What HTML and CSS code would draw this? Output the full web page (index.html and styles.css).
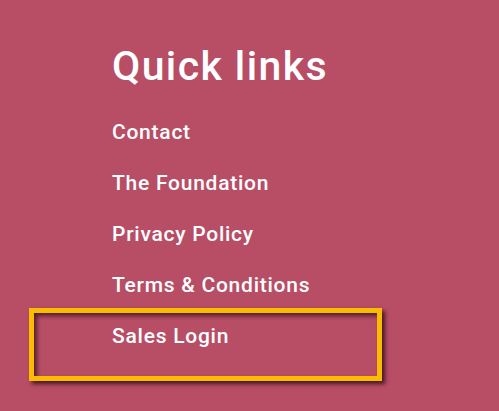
FILE: index.html
```html
<!DOCTYPE html>
<html lang="en">
<head>
  <meta charset="UTF-8">
  <meta name="viewport" content="width=device-width, initial-scale=1.0">
  <title>Quick links</title>
  <link rel="stylesheet" href="styles.css">
</head>
<body>

  <!-- Footer quick links -->
  <div class="quick-links">
    <h2>Quick links</h2>
    <ul class="link-list">
      <li><a href="#">Contact</a></li>
      <li><a href="#">The Foundation</a></li>
      <li><a href="#">Privacy Policy</a></li>
      <li><a href="#">Terms &amp; Conditions</a></li>
      <li class="marked">
        <a href="#">Sales Login</a>
        <!-- highlight frame drawn over the item -->
        <span class="highlight"></span>
      </li>
    </ul>
  </div>

</body>
</html>
```

FILE: styles.css
```css
body {
  margin: 0;
  background: #b84d66;
  font-family: Roboto, 'Liberation Sans', sans-serif;
  min-height: 411px;
}

.quick-links {
  padding: 42px 0 0 112px;
}

.quick-links h2 {
  margin: 0 0 17px;
  font-size: 41px;
  line-height: 48px;
  font-weight: 500;
  letter-spacing: 1.4px;
  color: #fff;
}

.link-list {
  list-style: none;
  margin: 0;
  padding: 0;
}

.link-list li {
  line-height: 51px;
  font-size: 21px;
  font-weight: 500;
  letter-spacing: 0.75px;
}

.link-list a {
  color: #fff;
  text-decoration: none;
}

.marked {
  position: relative;
}

/* yellow annotation box round the last link */
.highlight {
  position: absolute;
  left: -83px;
  top: -3px;
  width: 343px;
  height: 63px;
  border: 5px solid #fbbb00;
  box-shadow: 3px 3px 4px rgba(40, 10, 20, 0.8), inset 3px 3px 4px rgba(40, 10, 20, 0.7);
}
```
